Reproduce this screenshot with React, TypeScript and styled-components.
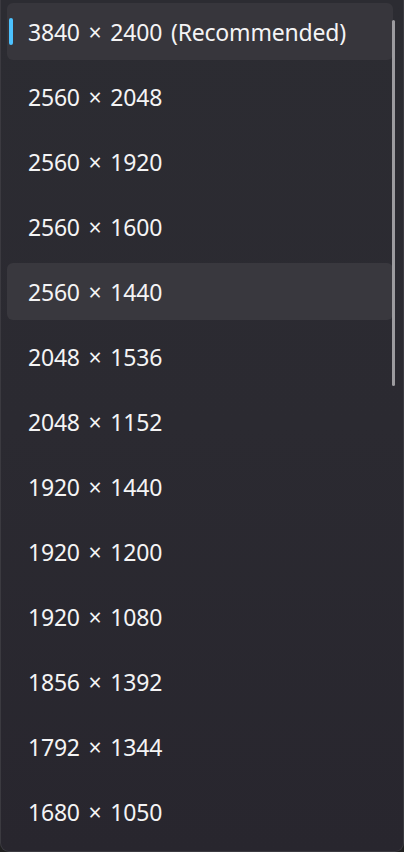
import styled, { createGlobalStyle } from "styled-components"

const GlobalStyle = createGlobalStyle`
  html, body {
    margin: 0;
    padding: 0;
    background: #202020;
  }
  body {
    font-family: "Noto Sans", "Open Sans", sans-serif;
    -webkit-font-smoothing: antialiased;
  }
`

const resolutions = [
  "3840 × 2400 (Recommended)",
  "2560 × 2048",
  "2560 × 1920",
  "2560 × 1600",
  "2560 × 1440",
  "2048 × 1536",
  "2048 × 1152",
  "1920 × 1440",
  "1920 × 1200",
  "1920 × 1080",
  "1856 × 1392",
  "1792 × 1344",
  "1680 × 1050",
]

const SELECTED = 0
const HOVERED = 4

const App = (): JSX.Element => {
  return (
    <>
      <GlobalStyle />
      <Flyout>
        <List>
          {resolutions.map((label, i) => (
            <Option key={label} selected={i === SELECTED} hovered={i === HOVERED}>
              {i === SELECTED && <Accent />}
              <Label>{label}</Label>
            </Option>
          ))}
        </List>
        <ScrollThumb />
      </Flyout>
    </>
  )
}

export default App

const Flyout = styled.div`
  position: relative;
  box-sizing: border-box;
  width: 404px;
  height: 852px;
  overflow: hidden;
  background: linear-gradient(180deg, #2c2c32 0%, #2b2a31 50%, #28262e 100%);
  border: 1px solid #3b3a40;
  border-top: none;
  border-radius: 0 0 9px 9px;
`

const List = styled.div`
  display: flex;
  flex-direction: column;
  gap: 8px;
  padding: 3px 10px 0 6px;
`

const Option = styled.div<{ selected: boolean; hovered: boolean }>`
  position: relative;
  height: 57px;
  display: flex;
  align-items: center;
  padding-left: 21px;
  border-radius: 6px;
  background: ${({ selected, hovered }) =>
    selected ? "#37363c" : hovered ? "#39383e" : "transparent"};
`

const Accent = styled.span`
  position: absolute;
  left: 2px;
  top: 15px;
  width: 4px;
  height: 27px;
  border-radius: 2px;
  background: #4cc2ff;
`

const Label = styled.span`
  color: #f4f4f5;
  font-size: 23px;
  line-height: 1;
  padding-top: 1px;
  letter-spacing: -0.2px;
  word-spacing: 3px;
  white-space: nowrap;
`

const ScrollThumb = styled.div`
  position: absolute;
  top: 20px;
  left: 391px;
  width: 3px;
  height: 366px;
  border-radius: 2px;
  background: #9c9b9f;
`
